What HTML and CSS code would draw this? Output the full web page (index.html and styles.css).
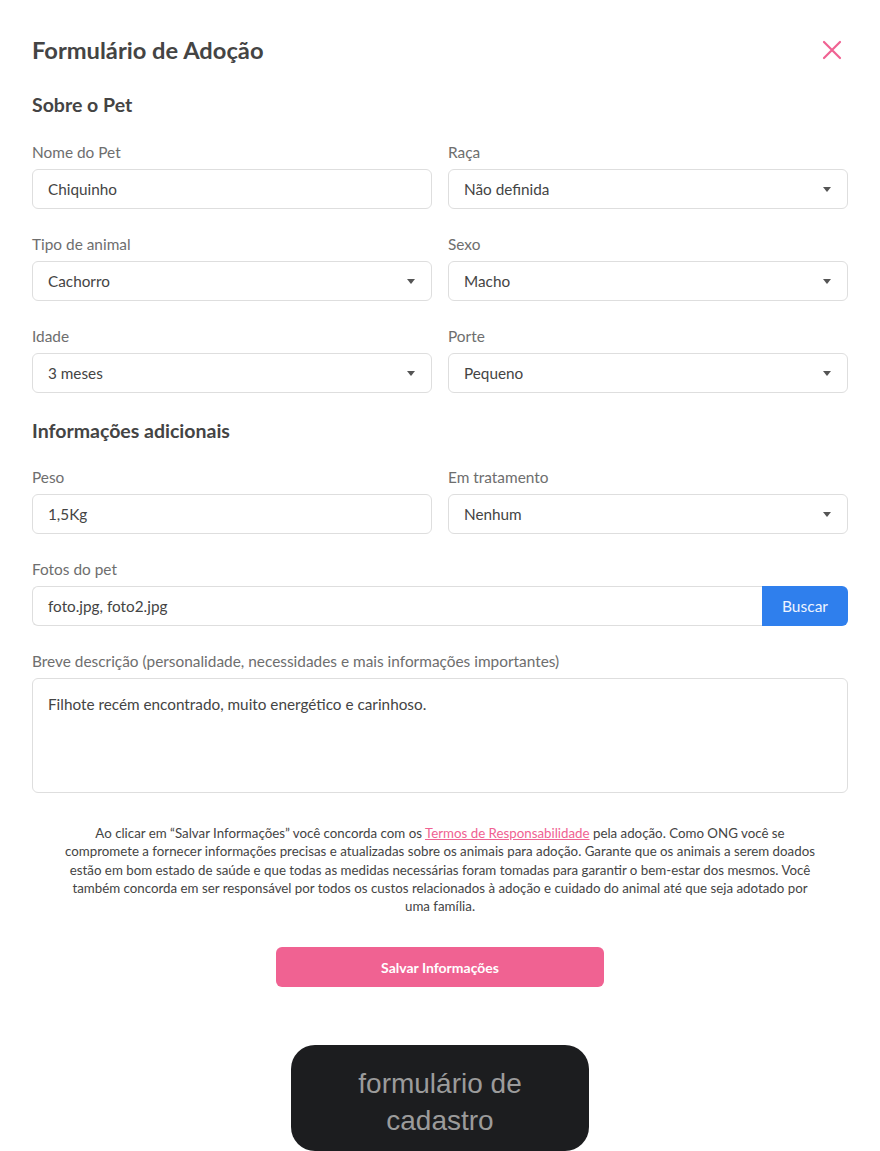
FILE: index.html
```html
<!DOCTYPE html>
<html lang="pt-BR">
<head>
<meta charset="utf-8">
<title>Formulário de Adoção</title>
<link rel="stylesheet" href="styles.css">
</head>
<body>
<main class="form">
  <header class="form-header">
    <h1 class="title">Formulário de Adoção</h1>
    <button class="close" aria-label="Fechar">
      <svg width="20" height="20" viewBox="0 0 20 20"><path d="M2 2 L18 18 M18 2 L2 18" stroke="#f06292" stroke-width="2.2" stroke-linecap="round" fill="none"/></svg>
    </button>
  </header>

  <h2 class="section">Sobre o Pet</h2>
  <div class="grid">
    <div class="field">
      <label class="label">Nome do Pet</label>
      <div class="control">Chiquinho</div>
    </div>
    <div class="field">
      <label class="label">Raça</label>
      <div class="control select">Não definida<span class="caret"></span></div>
    </div>
    <div class="field">
      <label class="label">Tipo de animal</label>
      <div class="control select">Cachorro<span class="caret"></span></div>
    </div>
    <div class="field">
      <label class="label">Sexo</label>
      <div class="control select">Macho<span class="caret"></span></div>
    </div>
    <div class="field">
      <label class="label">Idade</label>
      <div class="control select">3 meses<span class="caret"></span></div>
    </div>
    <div class="field">
      <label class="label">Porte</label>
      <div class="control select">Pequeno<span class="caret"></span></div>
    </div>
  </div>

  <h2 class="section">Informações adicionais</h2>
  <div class="grid">
    <div class="field">
      <label class="label">Peso</label>
      <div class="control">1,5Kg</div>
    </div>
    <div class="field">
      <label class="label">Em tratamento</label>
      <div class="control select">Nenhum<span class="caret"></span></div>
    </div>
  </div>

  <div class="field wide">
    <label class="label">Fotos do pet</label>
    <div class="file">
      <div class="control file-input">foto.jpg, foto2.jpg</div>
      <button class="browse">Buscar</button>
    </div>
  </div>

  <div class="field wide">
    <label class="label">Breve descrição (personalidade, necessidades e mais informações importantes)</label>
    <div class="control textarea">Filhote recém encontrado, muito energético e carinhoso.</div>
  </div>

  <p class="terms">Ao clicar em “Salvar Informações” você concorda com os <a href="#">Termos de Responsabilidade</a> pela adoção. Como ONG você se compromete a fornecer informações precisas e atualizadas sobre os animais para adoção. Garante que os animais a serem doados estão em bom estado de saúde e que todas as medidas necessárias foram tomadas para garantir o bem-estar dos mesmos. Você também concorda em ser responsável por todos os custos relacionados à adoção e cuidado do animal até que seja adotado por uma família.</p>

  <div class="actions">
    <button class="save">Salvar Informações</button>
  </div>
</main>
<div class="caption-wrap">
  <div class="caption">formulário de cadastro</div>
</div>
</body>
</html>
```
FILE: styles.css
```css
* { box-sizing: border-box; }
html, body { margin: 0; background: #fff; }
body {
  padding: 34px 32px 0;
  font-family: Lato, "Noto Sans", sans-serif;
  color: #444;
}
.form { display: flex; flex-direction: column; }
.form-header {
  display: flex;
  justify-content: space-between;
  align-items: center;
  height: 32px;
}
.title {
  margin: 0;
  font-size: 23.7px;
  line-height: 32px;
  font-weight: 700;
  color: #444;
}
.close {
  border: 0;
  background: none;
  padding: 0;
  width: 20px;
  height: 20px;
  margin-right: 6px;
  display: flex;
}
.section {
  margin: 26px 0 24px;
  font-size: 19.5px;
  line-height: 26px;
  font-weight: 700;
  color: #444;
}
.grid {
  display: grid;
  grid-template-columns: 1fr 1fr;
  column-gap: 16px;
  row-gap: 25px;
}
.grid + .section { margin-top: 25px; margin-bottom: 23px; }
.field { display: flex; flex-direction: column; }
.label {
  font-size: 15.4px;
  line-height: 20px;
  color: #6e6e6e;
  margin-bottom: 7px;
}
.control {
  height: 40px;
  border: 1px solid #dedede;
  border-radius: 6px;
  padding: 0 15px;
  display: flex;
  align-items: center;
  font-size: 15.3px;
  color: #444;
  background: #fff;
}
.select { justify-content: space-between; }
.caret {
  width: 0; height: 0;
  border-left: 4.5px solid transparent;
  border-right: 4.5px solid transparent;
  border-top: 5px solid #555;
  margin-right: 1px;
}
.wide { margin-top: 25px; }
.file { display: flex; }
.file-input {
  flex: 1;
  border-radius: 6px 0 0 6px;
  border-right: 0;
}
.browse {
  width: 86px;
  height: 40px;
  border: 0;
  border-radius: 0 6px 6px 0;
  background: #2f7fed;
  color: #eef4ff;
  font-family: inherit;
  font-size: 15.5px;
}
.textarea {
  height: 115px;
  align-items: flex-start;
  padding-top: 16px;
}
.terms {
  margin: 31px auto 0;
  max-width: 762px;
  text-align: center;
  font-size: 13.3px;
  line-height: 18.3px;
  color: #444;
}
.terms a { color: #f06292; text-decoration: underline; }
.actions { display: flex; justify-content: center; margin-top: 32px; }
.save {
  width: 328px;
  height: 40px;
  border: 0;
  border-radius: 6px;
  background: #f06292;
  color: #fff;
  font-family: inherit;
  font-weight: 700;
  font-size: 14px;
}
.caption-wrap { display: flex; justify-content: center; margin-top: 58px; }
.caption {
  width: 298px;
  height: 106px;
  background: #1c1d1f;
  border-radius: 24px;
  color: #9b9b9b;
  font-family: "Liberation Sans", Arial, sans-serif;
  font-size: 28px;
  line-height: 37px;
  text-align: center;
  display: flex;
  align-items: center;
  justify-content: center;
  padding: 7px 50px 0;
}
```
